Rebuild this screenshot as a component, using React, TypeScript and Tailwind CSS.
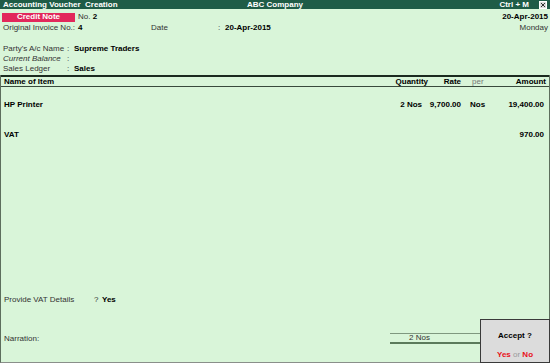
import React from "react";

function CloseBox() {
  return (
    <svg width="8" height="8" viewBox="0 0 8 8" className="block">
      <rect x="0.5" y="0.5" width="7" height="7" fill="#dcdcdc" stroke="#ffffff" />
      <path d="M2 2 L6 6 M6 2 L2 6" stroke="#333" strokeWidth="1" />
    </svg>
  );
}

function InfoRow({ label, value, italic }: { label: string; value?: string; italic?: boolean }) {
  return (
    <div className="flex h-[10px] items-center whitespace-nowrap">
      <span className={"w-[64px] text-[#333] " + (italic ? "italic" : "")}>{label}</span>
      <span className="w-[7px] text-[#333]">:</span>
      <span className="font-bold text-black">{value}</span>
    </div>
  );
}

function ItemRow({ name, qty, rate, per, amount }: { name: string; qty?: string; rate?: string; per?: string; amount: string }) {
  return (
    <div className="flex h-[10px] items-center whitespace-nowrap font-bold text-black">
      <span className="flex-1 pl-[3px]">{name}</span>
      <span className="flex w-[60px] justify-end pr-[6px]">{qty}</span>
      <span className="flex w-[33px] justify-end">{rate}</span>
      <span className="w-[39px] pl-[9px]">{per}</span>
      <span className="flex w-[49px] justify-end pr-[5px]">{amount}</span>
    </div>
  );
}

export default function App() {
  return (
    <div
      className="relative flex h-[363px] w-[550px] flex-col overflow-hidden bg-[#d9f5d9] text-[8px] leading-[10px]"
      style={{ fontFamily: '"Liberation Sans", Arial, sans-serif' }}
    >
      {/* title bar */}
      <div className="flex h-[9px] items-center whitespace-nowrap bg-[#1f5c47] font-bold text-white">
        <span className="flex-1 pl-[3px] whitespace-pre">Accounting Voucher  Creation</span>
        <span className="flex-1 text-center">ABC Company</span>
        <span className="flex flex-1 items-center justify-end gap-[10px] pr-[3px]">
          <span>Ctrl + M</span>
          <CloseBox />
        </span>
      </div>

      {/* voucher header */}
      <div className="flex flex-col whitespace-nowrap px-[2px] pt-[3px]">
        <div className="flex h-[10px] items-center">
          <span className="flex h-[9px] w-[73px] items-center justify-center bg-[#e2285c] font-bold text-white">
            Credit Note
          </span>
          <span className="ml-[3px] text-[#333]">
            No. <b className="text-black">2</b>
          </span>
          <span className="ml-auto font-bold text-black">20-Apr-2015</span>
        </div>
        <div className="mt-[1px] flex h-[10px] items-center pl-[1px]">
          <span className="w-[75px] text-[#333]">Original Invoice No.:</span>
          <span className="w-[73px] font-bold text-black">4</span>
          <span className="w-[67px] text-[#333]">Date</span>
          <span className="w-[7px] text-[#333]">:</span>
          <span className="font-bold text-black">20-Apr-2015</span>
          <span className="ml-auto text-[#333]">Monday</span>
        </div>
        <div className="mt-[11px] flex flex-col pl-[1px]">
          <InfoRow label="Party's A/c Name" value="Supreme Traders" />
          <InfoRow label="Current Balance" italic />
          <InfoRow label="Sales Ledger" value="Sales" />
        </div>
      </div>

      {/* items table */}
      <div className="mt-[1px] flex flex-1 flex-col whitespace-nowrap border-x border-b border-x-[#5d6e5d] border-b-[#8a8f8a]">
        <div className="flex h-[12px] items-center border-t-2 border-b border-t-[#1b2a1f] border-b-[#394a3d] font-bold text-black">
          <span className="flex-1 pl-[3px]">Name of Item</span>
          <span className="flex w-[60px] justify-end">Quantity</span>
          <span className="flex w-[33px] justify-end">Rate</span>
          <span className="w-[39px] pl-[11px] font-normal text-[#777]">per</span>
          <span className="flex w-[49px] justify-end pr-[3px]">Amount</span>
        </div>

        <div className="mt-[13px]">
          <ItemRow name="HP Printer" qty="2 Nos" rate="9,700.00" per="Nos" amount="19,400.00" />
        </div>
        <div className="mt-[20px]">
          <ItemRow name="VAT" amount="970.00" />
        </div>

        <div className="flex-1" />

        <div className="flex h-[10px] items-center pl-[3px] text-[#333]">
          <span className="w-[90px]">Provide VAT Details</span>
          <span className="w-[8px]">?</span>
          <span className="font-bold text-black">Yes</span>
        </div>

        <div className="mt-[28px] mb-[18px] flex items-center">
          <span className="flex-1 pl-[3px] text-[#333]">Narration:</span>
          <div className="mr-[69px] flex h-[11px] w-[90px] items-center justify-end border-t border-b-2 border-t-[#7f987f] border-b-[#5b7a5b] pr-[50px] text-[#333]">
            2 Nos
          </div>
        </div>
      </div>

      {/* accept dialog */}
      <div className="absolute right-0 bottom-0 flex h-[44px] w-[70px] flex-col items-center whitespace-nowrap border border-[#3a3a3a] bg-[#dcdcdc]">
        <span className="mt-[11px] font-bold text-black">Accept ?</span>
        <span className="mt-auto mb-[2px] font-bold text-[#e8101a]">
          Yes <span className="font-normal text-[#9a9a9a]">or</span> No
        </span>
      </div>
    </div>
  );
}
